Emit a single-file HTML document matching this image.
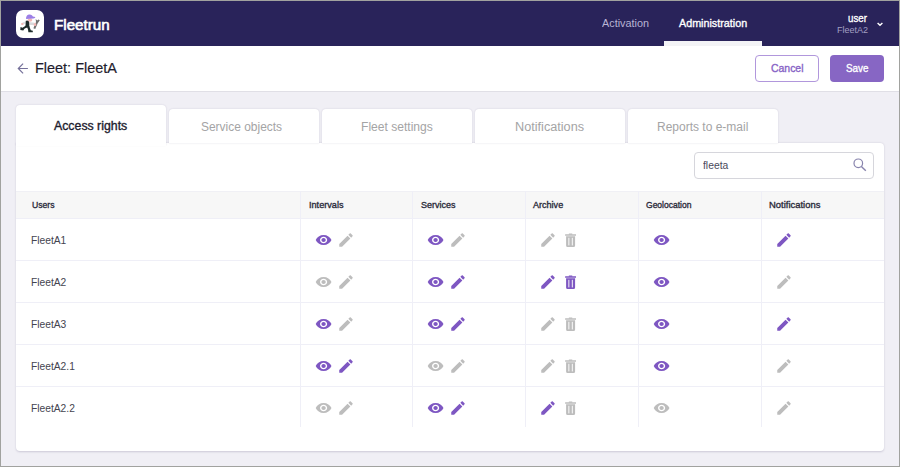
<!DOCTYPE html>
<html><head><meta charset="utf-8"><style>
html,body{margin:0;padding:0;}
body{width:900px;height:467px;position:relative;overflow:hidden;background:#f0eff5;font-family:"Liberation Sans",sans-serif;}
.t{position:absolute;white-space:nowrap;transform-origin:0 0;}
.i{position:absolute;display:block;}
.a{position:absolute;}
</style></head><body>
<div class="a" style="left:0;top:0;width:900px;height:46px;background:#29235a"></div>
<div class="a" style="left:16px;top:10px;width:28px;height:28px;border-radius:7px;background:#fff"></div>
<svg class="i" style="left:16px;top:10px" width="28" height="28" viewBox="0 0 28 28">
<path d="M10.1 11.3 L6.3 12.6 L6.6 14.4 L10.3 13.6 Z" fill="#e0e0e2"/>
<path d="M12.5 12 L18.6 12.8 L18.6 15.3 L12.8 14.8 Z" fill="#d9d9db"/>
<path d="M9.8 10.8 L13 10.5 L13.4 17.2 L9.4 17.4 Z" fill="#1d2b2a"/>
<path d="M10 15.5 L12.8 16.6 L8.4 18.8 L7.3 20.6 L4.3 20.1 L4.5 17 L6.5 17.8 Z" fill="#1d2b2a"/>
<path d="M10.8 16.3 L13.3 16.3 L14.8 20.3 L16.8 20.8 L16.8 22.3 L12.4 22.3 L12 19.5 Z" fill="#1d2b2a"/>
<ellipse cx="14" cy="10" rx="2.3" ry="1.8" fill="#f3b6b4"/>
<path d="M10.1 8.9 C9.9 5.6 11.6 4.4 13.6 4.4 C15.6 4.4 16.6 5.6 16.9 6.6 L19.3 6.9 C19.3 7.8 18.6 8.3 17.4 8.4 Z" fill="#9c7fe6"/>
<ellipse cx="6.3" cy="14" rx="1.3" ry="1" fill="#f3b6b4"/>
<path d="M18.3 18.6 L21.3 11.6" stroke="#6f6f6f" stroke-width="2"/>
<path d="M20 12.2 L19.7 9 L21.2 10.6 L22.4 9.4 L23.8 10.3 L22.2 12.6 Z" fill="#6f6f6f"/>
<ellipse cx="19" cy="14.4" rx="1.3" ry="1.5" fill="#f3b6b4"/>
</svg>
<div class="t" style="left:54.28px;top:16.54px;font-size:14.5px;line-height:17.4px;color:#ffffff;font-weight:400;-webkit-text-stroke:0.6px #ffffff;transform:scaleX(1.0462)">Fleetrun</div>
<div class="t" style="left:601.96px;top:16.84px;font-size:11.5px;line-height:13.8px;color:#b8b4d4;font-weight:400;transform:scaleX(0.9424)">Activation</div>
<div class="t" style="left:678.92px;top:16.84px;font-size:11.5px;line-height:13.8px;color:#ffffff;font-weight:400;-webkit-text-stroke:0.35px #ffffff;transform:scaleX(0.9347)">Administration</div>
<div class="t" style="left:847.92px;top:11.97px;font-size:11px;line-height:13.2px;color:#ffffff;font-weight:400;-webkit-text-stroke:0.35px #ffffff;transform:scaleX(0.8822)">user</div>
<div class="t" style="left:836.66px;top:24.47px;font-size:9.5px;line-height:11.4px;color:#a29fc2;font-weight:400;transform:scaleX(0.9494)">FleetA2</div>
<div class="a" style="left:664px;top:41px;width:98px;height:5px;background:#f3f3f6"></div>
<svg class="i" style="left:876px;top:21px" width="8" height="6" viewBox="0 0 8 6"><path d="M1.6 1.9 L4 4.3 L6.4 1.9" stroke="#fff" stroke-width="1.4" fill="none"/></svg>
<div class="a" style="left:0;top:46px;width:900px;height:45px;background:#fff;border-bottom:1px solid #e0dfe6"></div>
<svg class="i" style="left:17px;top:63px" width="12" height="11" viewBox="0 0 12 11"><path d="M10.9 5.5 H1.3 M6.1 0.7 L1.3 5.5 L6.1 10.3" stroke="#75719a" stroke-width="1.2" fill="none"/></svg>
<div class="t" style="left:34.70px;top:59.30px;font-size:15px;line-height:18.0px;color:#1f1d2e;font-weight:400;-webkit-text-stroke:0.2px #1f1d2e;transform:scaleX(0.9629)">Fleet: FleetA</div>
<div class="a" style="left:755px;top:55px;width:62px;height:25px;border:1px solid #b197dc;border-radius:4px;background:#fff"></div>
<div class="t" style="left:771.46px;top:61.95px;font-size:11px;line-height:13.2px;color:#8763c6;font-weight:400;-webkit-text-stroke:0.35px #8763c6;transform:scaleX(0.9491)">Cancel</div>
<div class="a" style="left:830px;top:55px;width:54px;height:27px;border-radius:4px;background:#8766c4"></div>
<div class="t" style="left:845.50px;top:61.95px;font-size:11px;line-height:13.2px;color:#ffffff;font-weight:400;-webkit-text-stroke:0.35px #ffffff;transform:scaleX(0.8957)">Save</div>
<div class="a" style="left:16px;top:143px;width:868px;height:308px;background:#fff;border-radius:0 4px 4px 4px;box-shadow:0 0.5px 2px rgba(40,30,80,0.18)"></div>
<div class="a" style="left:16px;top:105px;width:150px;height:40px;border-radius:4px 4px 0 0;background:#fff;box-shadow:0 0 2px rgba(40,30,80,0.16)"></div>
<div class="a" style="left:169px;top:109px;width:150px;height:34px;border-radius:4px 4px 0 0;background:#fff;box-shadow:0 0 2px rgba(40,30,80,0.16)"></div>
<div class="a" style="left:322px;top:109px;width:150px;height:34px;border-radius:4px 4px 0 0;background:#fff;box-shadow:0 0 2px rgba(40,30,80,0.16)"></div>
<div class="a" style="left:475px;top:109px;width:150px;height:34px;border-radius:4px 4px 0 0;background:#fff;box-shadow:0 0 2px rgba(40,30,80,0.16)"></div>
<div class="a" style="left:628px;top:109px;width:150px;height:34px;border-radius:4px 4px 0 0;background:#fff;box-shadow:0 0 2px rgba(40,30,80,0.16)"></div>
<div class="a" style="left:16px;top:141px;width:150px;height:5px;background:#fff"></div>
<div class="t" style="left:54.04px;top:118.88px;font-size:12px;line-height:14.4px;color:#1d1b2e;font-weight:400;-webkit-text-stroke:0.35px #1d1b2e;transform:scaleX(1.0262)">Access rights</div>
<div class="t" style="left:201.36px;top:120.18px;font-size:12px;line-height:14.4px;color:#a4a4a5;font-weight:400;transform:scaleX(0.9961)">Service objects</div>
<div class="t" style="left:360.74px;top:120.02px;font-size:12px;line-height:14.4px;color:#a4a4a5;font-weight:400;transform:scaleX(1.0068)">Fleet settings</div>
<div class="t" style="left:515.32px;top:120.02px;font-size:12px;line-height:14.4px;color:#a4a4a5;font-weight:400;transform:scaleX(1.0567)">Notifications</div>
<div class="t" style="left:657.36px;top:119.86px;font-size:12px;line-height:14.4px;color:#a4a4a5;font-weight:400;transform:scaleX(1.0001)">Reports to e-mail</div>
<div class="a" style="left:694px;top:152px;width:178px;height:25px;border:1px solid #d6d6dc;border-radius:4px;background:#fff"></div>
<div class="t" style="left:702.58px;top:159.05px;font-size:11px;line-height:13.2px;color:#4a4a5c;font-weight:400;transform:scaleX(0.9399)">fleeta</div>
<svg class="i" style="left:852px;top:157.2px" width="16" height="16" viewBox="0 0 16 16"><circle cx="6.3" cy="6.3" r="4.3" stroke="#8884ad" stroke-width="1.2" fill="none"/><path d="M9.4 9.4 L13.8 13.8" stroke="#8884ad" stroke-width="1.4"/></svg>
<div class="a" style="left:16px;top:191px;width:868px;height:26px;background:#f7f7f7;border-top:1px solid #f0f0f5"></div>
<div class="t" style="left:31.50px;top:198.59px;font-size:9.5px;line-height:11.4px;color:#2a2a3a;font-weight:400;-webkit-text-stroke:0.35px #2a2a3a;transform:scaleX(0.9092)">Users</div>
<div class="t" style="left:308.92px;top:198.59px;font-size:9.5px;line-height:11.4px;color:#2a2a3a;font-weight:400;-webkit-text-stroke:0.35px #2a2a3a;transform:scaleX(0.9619)">Intervals</div>
<div class="t" style="left:420.54px;top:199.03px;font-size:9.5px;line-height:11.4px;color:#2a2a3a;font-weight:400;-webkit-text-stroke:0.35px #2a2a3a;transform:scaleX(0.9467)">Services</div>
<div class="t" style="left:533.00px;top:198.59px;font-size:9.5px;line-height:11.4px;color:#2a2a3a;font-weight:400;-webkit-text-stroke:0.35px #2a2a3a;transform:scaleX(0.9522)">Archive</div>
<div class="t" style="left:645.58px;top:199.03px;font-size:9.5px;line-height:11.4px;color:#2a2a3a;font-weight:400;-webkit-text-stroke:0.35px #2a2a3a;transform:scaleX(0.8967)">Geolocation</div>
<div class="t" style="left:769.00px;top:198.59px;font-size:9.5px;line-height:11.4px;color:#2a2a3a;font-weight:400;-webkit-text-stroke:0.35px #2a2a3a;transform:scaleX(0.9924)">Notifications</div>
<div class="a" style="left:300px;top:191px;width:1px;height:236px;background:#efeff7"></div>
<div class="a" style="left:412px;top:191px;width:1px;height:236px;background:#efeff7"></div>
<div class="a" style="left:525px;top:191px;width:1px;height:236px;background:#efeff7"></div>
<div class="a" style="left:638px;top:191px;width:1px;height:236px;background:#efeff7"></div>
<div class="a" style="left:761px;top:191px;width:1px;height:236px;background:#efeff7"></div>
<div class="a" style="left:16px;top:218px;width:868px;height:1px;background:#efeff7"></div>
<div class="t" style="left:30.82px;top:233.55px;font-size:11px;line-height:13.2px;color:#44444f;font-weight:400;transform:scaleX(0.9308)">FleetA1</div>
<svg class="i" style="left:314.9px;top:231.5px" width="17.2" height="16" viewBox="0 0 24 24" preserveAspectRatio="none"><path fill="#7e57c2" d="M12 4.5C7 4.5 2.730 7.61 1 12c1.73 4.39 6 7.5 11 7.5s9.27-3.11 11-7.5c-1.73-4.39-6-7.5-11-7.5zM12 17c-2.76 0-5-2.24-5-5s2.24-5 5-5 5 2.24 5 5-2.240 5-5 5zm0-8c-1.66 0-3 1.34-3 3s1.34 3 3 3 3-1.34 3-3-1.34-3-3-3z"/></svg>
<svg class="i" style="left:336.75px;top:230.5px" width="18" height="18" viewBox="0 0 24 24"><path fill="#bdbdbd" d="M3 17.25V21h3.75L17.81 9.94l-3.75-3.75L3 17.25zM20.71 7.04c.39-.39.39-1.02 0-1.41l-2.34-2.34c-.39-.39-1.02-.39-1.41 0l-1.830 1.83 3.75 3.75 1.83-1.83z"/></svg>
<svg class="i" style="left:426.9px;top:231.5px" width="17.2" height="16" viewBox="0 0 24 24" preserveAspectRatio="none"><path fill="#7e57c2" d="M12 4.5C7 4.5 2.730 7.61 1 12c1.73 4.39 6 7.5 11 7.5s9.27-3.11 11-7.5c-1.73-4.39-6-7.5-11-7.5zM12 17c-2.76 0-5-2.24-5-5s2.24-5 5-5 5 2.24 5 5-2.240 5-5 5zm0-8c-1.66 0-3 1.34-3 3s1.34 3 3 3 3-1.34 3-3-1.34-3-3-3z"/></svg>
<svg class="i" style="left:448.75px;top:230.5px" width="18" height="18" viewBox="0 0 24 24"><path fill="#bdbdbd" d="M3 17.25V21h3.75L17.81 9.94l-3.75-3.75L3 17.25zM20.71 7.04c.39-.39.39-1.02 0-1.41l-2.34-2.34c-.39-.39-1.02-.39-1.41 0l-1.830 1.83 3.75 3.75 1.83-1.83z"/></svg>
<svg class="i" style="left:538.75px;top:230.5px" width="18" height="18" viewBox="0 0 24 24"><path fill="#bdbdbd" d="M3 17.25V21h3.75L17.81 9.94l-3.75-3.75L3 17.25zM20.71 7.04c.39-.39.39-1.02 0-1.41l-2.34-2.34c-.39-.39-1.02-.39-1.41 0l-1.830 1.83 3.75 3.75 1.83-1.83z"/></svg>
<svg class="i" style="left:564.8px;top:232.7px" width="11.2" height="14" viewBox="0 0 11 14"><rect x="3.6" y="0.4" width="3.8" height="1.3" rx="0.6" fill="#bdbdbd"/><rect x="0" y="1.3" width="11" height="1.4" rx="0.3" fill="#bdbdbd"/><path fill="#bdbdbd" d="M1 3.3h9v9.1a1.5 1.5 0 0 1-1.5 1.5h-6a1.5 1.5 0 0 1-1.5-1.5z"/><rect x="3.2" y="4.8" width="1.1" height="7.6" fill="#fff" fill-opacity="0.85"/><rect x="6.7" y="4.8" width="1.1" height="7.6" fill="#fff" fill-opacity="0.85"/></svg>
<svg class="i" style="left:652.9px;top:231.5px" width="17.2" height="16" viewBox="0 0 24 24" preserveAspectRatio="none"><path fill="#7e57c2" d="M12 4.5C7 4.5 2.730 7.61 1 12c1.73 4.39 6 7.5 11 7.5s9.27-3.11 11-7.5c-1.73-4.39-6-7.5-11-7.5zM12 17c-2.76 0-5-2.24-5-5s2.24-5 5-5 5 2.24 5 5-2.240 5-5 5zm0-8c-1.66 0-3 1.34-3 3s1.34 3 3 3 3-1.34 3-3-1.34-3-3-3z"/></svg>
<svg class="i" style="left:774.75px;top:230.5px" width="18" height="18" viewBox="0 0 24 24"><path fill="#7e57c2" d="M3 17.25V21h3.75L17.81 9.94l-3.75-3.75L3 17.25zM20.71 7.04c.39-.39.39-1.02 0-1.41l-2.34-2.34c-.39-.39-1.02-.39-1.41 0l-1.830 1.83 3.75 3.75 1.83-1.83z"/></svg>
<div class="a" style="left:16px;top:260px;width:868px;height:1px;background:#efeff7"></div>
<div class="t" style="left:30.82px;top:275.55px;font-size:11px;line-height:13.2px;color:#44444f;font-weight:400;transform:scaleX(0.9308)">FleetA2</div>
<svg class="i" style="left:314.9px;top:273.5px" width="17.2" height="16" viewBox="0 0 24 24" preserveAspectRatio="none"><path fill="#bdbdbd" d="M12 4.5C7 4.5 2.730 7.61 1 12c1.73 4.39 6 7.5 11 7.5s9.27-3.11 11-7.5c-1.73-4.39-6-7.5-11-7.5zM12 17c-2.76 0-5-2.24-5-5s2.24-5 5-5 5 2.24 5 5-2.240 5-5 5zm0-8c-1.66 0-3 1.34-3 3s1.34 3 3 3 3-1.34 3-3-1.34-3-3-3z"/></svg>
<svg class="i" style="left:336.75px;top:272.5px" width="18" height="18" viewBox="0 0 24 24"><path fill="#bdbdbd" d="M3 17.25V21h3.75L17.81 9.94l-3.75-3.75L3 17.25zM20.71 7.04c.39-.39.39-1.02 0-1.41l-2.34-2.34c-.39-.39-1.02-.39-1.41 0l-1.830 1.83 3.75 3.75 1.83-1.83z"/></svg>
<svg class="i" style="left:426.9px;top:273.5px" width="17.2" height="16" viewBox="0 0 24 24" preserveAspectRatio="none"><path fill="#7e57c2" d="M12 4.5C7 4.5 2.730 7.61 1 12c1.73 4.39 6 7.5 11 7.5s9.27-3.11 11-7.5c-1.73-4.39-6-7.5-11-7.5zM12 17c-2.76 0-5-2.24-5-5s2.24-5 5-5 5 2.24 5 5-2.240 5-5 5zm0-8c-1.66 0-3 1.34-3 3s1.34 3 3 3 3-1.34 3-3-1.34-3-3-3z"/></svg>
<svg class="i" style="left:448.75px;top:272.5px" width="18" height="18" viewBox="0 0 24 24"><path fill="#7e57c2" d="M3 17.25V21h3.75L17.81 9.94l-3.75-3.75L3 17.25zM20.71 7.04c.39-.39.39-1.02 0-1.41l-2.34-2.34c-.39-.39-1.02-.39-1.41 0l-1.830 1.83 3.75 3.75 1.83-1.83z"/></svg>
<svg class="i" style="left:538.75px;top:272.5px" width="18" height="18" viewBox="0 0 24 24"><path fill="#7e57c2" d="M3 17.25V21h3.75L17.81 9.94l-3.75-3.75L3 17.25zM20.71 7.04c.39-.39.39-1.02 0-1.41l-2.34-2.34c-.39-.39-1.02-.39-1.41 0l-1.830 1.83 3.75 3.75 1.83-1.83z"/></svg>
<svg class="i" style="left:564.8px;top:274.7px" width="11.2" height="14" viewBox="0 0 11 14"><rect x="3.6" y="0.4" width="3.8" height="1.3" rx="0.6" fill="#7e57c2"/><rect x="0" y="1.3" width="11" height="1.4" rx="0.3" fill="#7e57c2"/><path fill="#7e57c2" d="M1 3.3h9v9.1a1.5 1.5 0 0 1-1.5 1.5h-6a1.5 1.5 0 0 1-1.5-1.5z"/><rect x="3.2" y="4.8" width="1.1" height="7.6" fill="#fff" fill-opacity="0.85"/><rect x="6.7" y="4.8" width="1.1" height="7.6" fill="#fff" fill-opacity="0.85"/></svg>
<svg class="i" style="left:652.9px;top:273.5px" width="17.2" height="16" viewBox="0 0 24 24" preserveAspectRatio="none"><path fill="#7e57c2" d="M12 4.5C7 4.5 2.730 7.61 1 12c1.73 4.39 6 7.5 11 7.5s9.27-3.11 11-7.5c-1.73-4.39-6-7.5-11-7.5zM12 17c-2.76 0-5-2.24-5-5s2.24-5 5-5 5 2.24 5 5-2.240 5-5 5zm0-8c-1.66 0-3 1.34-3 3s1.34 3 3 3 3-1.34 3-3-1.34-3-3-3z"/></svg>
<svg class="i" style="left:774.75px;top:272.5px" width="18" height="18" viewBox="0 0 24 24"><path fill="#bdbdbd" d="M3 17.25V21h3.75L17.81 9.94l-3.75-3.75L3 17.25zM20.71 7.04c.39-.39.39-1.02 0-1.41l-2.34-2.34c-.39-.39-1.02-.39-1.41 0l-1.830 1.83 3.75 3.75 1.83-1.83z"/></svg>
<div class="a" style="left:16px;top:302px;width:868px;height:1px;background:#efeff7"></div>
<div class="t" style="left:30.82px;top:317.55px;font-size:11px;line-height:13.2px;color:#44444f;font-weight:400;transform:scaleX(0.9308)">FleetA3</div>
<svg class="i" style="left:314.9px;top:315.5px" width="17.2" height="16" viewBox="0 0 24 24" preserveAspectRatio="none"><path fill="#7e57c2" d="M12 4.5C7 4.5 2.730 7.61 1 12c1.73 4.39 6 7.5 11 7.5s9.27-3.11 11-7.5c-1.73-4.39-6-7.5-11-7.5zM12 17c-2.76 0-5-2.24-5-5s2.24-5 5-5 5 2.24 5 5-2.240 5-5 5zm0-8c-1.66 0-3 1.34-3 3s1.34 3 3 3 3-1.34 3-3-1.34-3-3-3z"/></svg>
<svg class="i" style="left:336.75px;top:314.5px" width="18" height="18" viewBox="0 0 24 24"><path fill="#bdbdbd" d="M3 17.25V21h3.75L17.81 9.94l-3.75-3.75L3 17.25zM20.71 7.04c.39-.39.39-1.02 0-1.41l-2.34-2.34c-.39-.39-1.02-.39-1.41 0l-1.830 1.83 3.75 3.75 1.83-1.83z"/></svg>
<svg class="i" style="left:426.9px;top:315.5px" width="17.2" height="16" viewBox="0 0 24 24" preserveAspectRatio="none"><path fill="#7e57c2" d="M12 4.5C7 4.5 2.730 7.61 1 12c1.73 4.39 6 7.5 11 7.5s9.27-3.11 11-7.5c-1.73-4.39-6-7.5-11-7.5zM12 17c-2.76 0-5-2.24-5-5s2.24-5 5-5 5 2.24 5 5-2.240 5-5 5zm0-8c-1.66 0-3 1.34-3 3s1.34 3 3 3 3-1.34 3-3-1.34-3-3-3z"/></svg>
<svg class="i" style="left:448.75px;top:314.5px" width="18" height="18" viewBox="0 0 24 24"><path fill="#7e57c2" d="M3 17.25V21h3.75L17.81 9.94l-3.75-3.75L3 17.25zM20.71 7.04c.39-.39.39-1.02 0-1.41l-2.34-2.34c-.39-.39-1.02-.39-1.41 0l-1.830 1.83 3.75 3.75 1.83-1.83z"/></svg>
<svg class="i" style="left:538.75px;top:314.5px" width="18" height="18" viewBox="0 0 24 24"><path fill="#bdbdbd" d="M3 17.25V21h3.75L17.81 9.94l-3.75-3.75L3 17.25zM20.71 7.04c.39-.39.39-1.02 0-1.41l-2.34-2.34c-.39-.39-1.02-.39-1.41 0l-1.830 1.83 3.75 3.75 1.83-1.83z"/></svg>
<svg class="i" style="left:564.8px;top:316.7px" width="11.2" height="14" viewBox="0 0 11 14"><rect x="3.6" y="0.4" width="3.8" height="1.3" rx="0.6" fill="#bdbdbd"/><rect x="0" y="1.3" width="11" height="1.4" rx="0.3" fill="#bdbdbd"/><path fill="#bdbdbd" d="M1 3.3h9v9.1a1.5 1.5 0 0 1-1.5 1.5h-6a1.5 1.5 0 0 1-1.5-1.5z"/><rect x="3.2" y="4.8" width="1.1" height="7.6" fill="#fff" fill-opacity="0.85"/><rect x="6.7" y="4.8" width="1.1" height="7.6" fill="#fff" fill-opacity="0.85"/></svg>
<svg class="i" style="left:652.9px;top:315.5px" width="17.2" height="16" viewBox="0 0 24 24" preserveAspectRatio="none"><path fill="#7e57c2" d="M12 4.5C7 4.5 2.730 7.61 1 12c1.73 4.39 6 7.5 11 7.5s9.27-3.11 11-7.5c-1.73-4.39-6-7.5-11-7.5zM12 17c-2.76 0-5-2.24-5-5s2.24-5 5-5 5 2.24 5 5-2.240 5-5 5zm0-8c-1.66 0-3 1.34-3 3s1.34 3 3 3 3-1.34 3-3-1.34-3-3-3z"/></svg>
<svg class="i" style="left:774.75px;top:314.5px" width="18" height="18" viewBox="0 0 24 24"><path fill="#7e57c2" d="M3 17.25V21h3.75L17.81 9.94l-3.75-3.75L3 17.25zM20.71 7.04c.39-.39.39-1.02 0-1.41l-2.34-2.34c-.39-.39-1.02-.39-1.41 0l-1.830 1.83 3.75 3.75 1.83-1.83z"/></svg>
<div class="a" style="left:16px;top:344px;width:868px;height:1px;background:#efeff7"></div>
<div class="t" style="left:30.82px;top:359.55px;font-size:11px;line-height:13.2px;color:#44444f;font-weight:400;transform:scaleX(0.9308)">FleetA2.1</div>
<svg class="i" style="left:314.9px;top:357.5px" width="17.2" height="16" viewBox="0 0 24 24" preserveAspectRatio="none"><path fill="#7e57c2" d="M12 4.5C7 4.5 2.730 7.61 1 12c1.73 4.39 6 7.5 11 7.5s9.27-3.11 11-7.5c-1.73-4.39-6-7.5-11-7.5zM12 17c-2.76 0-5-2.24-5-5s2.24-5 5-5 5 2.24 5 5-2.240 5-5 5zm0-8c-1.66 0-3 1.34-3 3s1.34 3 3 3 3-1.34 3-3-1.34-3-3-3z"/></svg>
<svg class="i" style="left:336.75px;top:356.5px" width="18" height="18" viewBox="0 0 24 24"><path fill="#7e57c2" d="M3 17.25V21h3.75L17.81 9.94l-3.75-3.75L3 17.25zM20.71 7.04c.39-.39.39-1.02 0-1.41l-2.34-2.34c-.39-.39-1.02-.39-1.41 0l-1.830 1.83 3.75 3.75 1.83-1.83z"/></svg>
<svg class="i" style="left:426.9px;top:357.5px" width="17.2" height="16" viewBox="0 0 24 24" preserveAspectRatio="none"><path fill="#bdbdbd" d="M12 4.5C7 4.5 2.730 7.61 1 12c1.73 4.39 6 7.5 11 7.5s9.27-3.11 11-7.5c-1.73-4.39-6-7.5-11-7.5zM12 17c-2.76 0-5-2.24-5-5s2.24-5 5-5 5 2.24 5 5-2.240 5-5 5zm0-8c-1.66 0-3 1.34-3 3s1.34 3 3 3 3-1.34 3-3-1.34-3-3-3z"/></svg>
<svg class="i" style="left:448.75px;top:356.5px" width="18" height="18" viewBox="0 0 24 24"><path fill="#bdbdbd" d="M3 17.25V21h3.75L17.81 9.94l-3.75-3.75L3 17.25zM20.71 7.04c.39-.39.39-1.02 0-1.41l-2.34-2.34c-.39-.39-1.02-.39-1.41 0l-1.830 1.83 3.75 3.75 1.83-1.83z"/></svg>
<svg class="i" style="left:538.75px;top:356.5px" width="18" height="18" viewBox="0 0 24 24"><path fill="#bdbdbd" d="M3 17.25V21h3.75L17.81 9.94l-3.75-3.75L3 17.25zM20.71 7.04c.39-.39.39-1.02 0-1.41l-2.34-2.34c-.39-.39-1.02-.39-1.41 0l-1.830 1.83 3.75 3.75 1.83-1.83z"/></svg>
<svg class="i" style="left:564.8px;top:358.7px" width="11.2" height="14" viewBox="0 0 11 14"><rect x="3.6" y="0.4" width="3.8" height="1.3" rx="0.6" fill="#bdbdbd"/><rect x="0" y="1.3" width="11" height="1.4" rx="0.3" fill="#bdbdbd"/><path fill="#bdbdbd" d="M1 3.3h9v9.1a1.5 1.5 0 0 1-1.5 1.5h-6a1.5 1.5 0 0 1-1.5-1.5z"/><rect x="3.2" y="4.8" width="1.1" height="7.6" fill="#fff" fill-opacity="0.85"/><rect x="6.7" y="4.8" width="1.1" height="7.6" fill="#fff" fill-opacity="0.85"/></svg>
<svg class="i" style="left:652.9px;top:357.5px" width="17.2" height="16" viewBox="0 0 24 24" preserveAspectRatio="none"><path fill="#7e57c2" d="M12 4.5C7 4.5 2.730 7.61 1 12c1.73 4.39 6 7.5 11 7.5s9.27-3.11 11-7.5c-1.73-4.39-6-7.5-11-7.5zM12 17c-2.76 0-5-2.24-5-5s2.24-5 5-5 5 2.24 5 5-2.240 5-5 5zm0-8c-1.66 0-3 1.34-3 3s1.34 3 3 3 3-1.34 3-3-1.34-3-3-3z"/></svg>
<svg class="i" style="left:774.75px;top:356.5px" width="18" height="18" viewBox="0 0 24 24"><path fill="#bdbdbd" d="M3 17.25V21h3.75L17.81 9.94l-3.75-3.75L3 17.25zM20.71 7.04c.39-.39.39-1.02 0-1.41l-2.34-2.34c-.39-.39-1.02-.39-1.41 0l-1.830 1.83 3.75 3.75 1.83-1.83z"/></svg>
<div class="a" style="left:16px;top:386px;width:868px;height:1px;background:#efeff7"></div>
<div class="t" style="left:30.82px;top:401.55px;font-size:11px;line-height:13.2px;color:#44444f;font-weight:400;transform:scaleX(0.9308)">FleetA2.2</div>
<svg class="i" style="left:314.9px;top:399.5px" width="17.2" height="16" viewBox="0 0 24 24" preserveAspectRatio="none"><path fill="#bdbdbd" d="M12 4.5C7 4.5 2.730 7.61 1 12c1.73 4.39 6 7.5 11 7.5s9.27-3.11 11-7.5c-1.73-4.39-6-7.5-11-7.5zM12 17c-2.76 0-5-2.24-5-5s2.24-5 5-5 5 2.24 5 5-2.240 5-5 5zm0-8c-1.66 0-3 1.34-3 3s1.34 3 3 3 3-1.34 3-3-1.34-3-3-3z"/></svg>
<svg class="i" style="left:336.75px;top:398.5px" width="18" height="18" viewBox="0 0 24 24"><path fill="#bdbdbd" d="M3 17.25V21h3.75L17.81 9.94l-3.75-3.75L3 17.25zM20.71 7.04c.39-.39.39-1.02 0-1.41l-2.34-2.34c-.39-.39-1.02-.39-1.41 0l-1.830 1.83 3.75 3.75 1.83-1.83z"/></svg>
<svg class="i" style="left:426.9px;top:399.5px" width="17.2" height="16" viewBox="0 0 24 24" preserveAspectRatio="none"><path fill="#7e57c2" d="M12 4.5C7 4.5 2.730 7.61 1 12c1.73 4.39 6 7.5 11 7.5s9.27-3.11 11-7.5c-1.73-4.39-6-7.5-11-7.5zM12 17c-2.76 0-5-2.24-5-5s2.24-5 5-5 5 2.24 5 5-2.240 5-5 5zm0-8c-1.66 0-3 1.34-3 3s1.34 3 3 3 3-1.34 3-3-1.34-3-3-3z"/></svg>
<svg class="i" style="left:448.75px;top:398.5px" width="18" height="18" viewBox="0 0 24 24"><path fill="#7e57c2" d="M3 17.25V21h3.75L17.81 9.94l-3.75-3.75L3 17.25zM20.71 7.04c.39-.39.39-1.02 0-1.41l-2.34-2.34c-.39-.39-1.02-.39-1.41 0l-1.830 1.83 3.75 3.75 1.83-1.83z"/></svg>
<svg class="i" style="left:538.75px;top:398.5px" width="18" height="18" viewBox="0 0 24 24"><path fill="#7e57c2" d="M3 17.25V21h3.75L17.81 9.94l-3.75-3.75L3 17.25zM20.71 7.04c.39-.39.39-1.02 0-1.41l-2.34-2.34c-.39-.39-1.02-.39-1.41 0l-1.830 1.83 3.75 3.75 1.83-1.83z"/></svg>
<svg class="i" style="left:564.8px;top:400.7px" width="11.2" height="14" viewBox="0 0 11 14"><rect x="3.6" y="0.4" width="3.8" height="1.3" rx="0.6" fill="#bdbdbd"/><rect x="0" y="1.3" width="11" height="1.4" rx="0.3" fill="#bdbdbd"/><path fill="#bdbdbd" d="M1 3.3h9v9.1a1.5 1.5 0 0 1-1.5 1.5h-6a1.5 1.5 0 0 1-1.5-1.5z"/><rect x="3.2" y="4.8" width="1.1" height="7.6" fill="#fff" fill-opacity="0.85"/><rect x="6.7" y="4.8" width="1.1" height="7.6" fill="#fff" fill-opacity="0.85"/></svg>
<svg class="i" style="left:652.9px;top:399.5px" width="17.2" height="16" viewBox="0 0 24 24" preserveAspectRatio="none"><path fill="#bdbdbd" d="M12 4.5C7 4.5 2.730 7.61 1 12c1.73 4.39 6 7.5 11 7.5s9.27-3.11 11-7.5c-1.73-4.39-6-7.5-11-7.5zM12 17c-2.76 0-5-2.24-5-5s2.24-5 5-5 5 2.24 5 5-2.240 5-5 5zm0-8c-1.66 0-3 1.34-3 3s1.34 3 3 3 3-1.34 3-3-1.34-3-3-3z"/></svg>
<svg class="i" style="left:774.75px;top:398.5px" width="18" height="18" viewBox="0 0 24 24"><path fill="#bdbdbd" d="M3 17.25V21h3.75L17.81 9.94l-3.75-3.75L3 17.25zM20.71 7.04c.39-.39.39-1.02 0-1.41l-2.34-2.34c-.39-.39-1.02-.39-1.41 0l-1.830 1.83 3.75 3.75 1.83-1.83z"/></svg>
<div class="a" style="left:0;top:0;width:898px;height:465px;border:1px solid #a1a29f;"></div>
</body></html>
